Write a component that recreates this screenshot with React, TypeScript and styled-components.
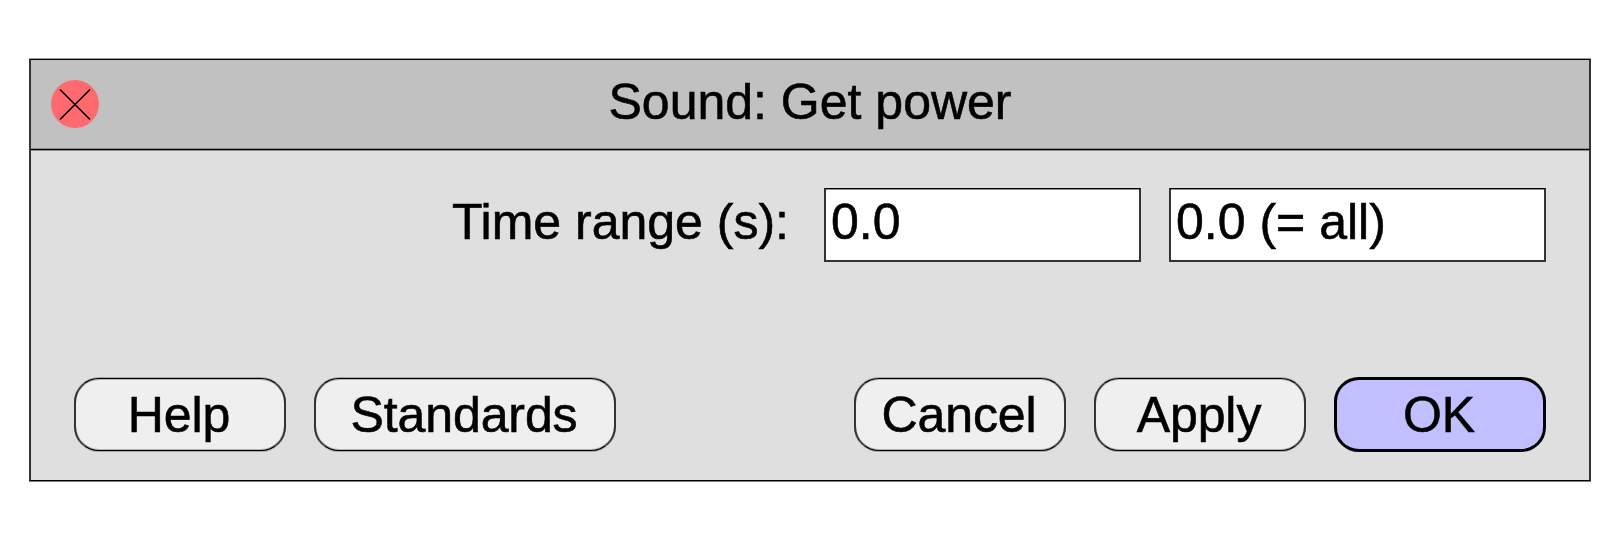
import React from "react";
import styled, { createGlobalStyle, css } from "styled-components";

const GlobalStyle = createGlobalStyle`
  * { box-sizing: border-box; }
  body { margin: 0; background: #fff; }
`;

const Page = styled.main`
  height: 540px;
  padding: 59px 29px;
  font: 50px/72px "Liberation Sans", Arial, Helvetica, sans-serif;
  color: #000;
  white-space: nowrap;
  -webkit-text-stroke: 0.6px #000;
`;

const Dialog = styled.section`
  display: flex;
  flex-direction: column;
  width: 1562px;
  height: 422px;
  background: #dfdfdf;
  border: solid #000;
  border-width: 1px 2px;
  border-color: #000 #333;
  box-shadow: 0 -1px #9f9f9f, 0 1px #7f7f7f;
`;

const TitleBar = styled.header`
  display: grid;
  grid-template-columns: 48px 1fr 48px;
  align-items: center;
  height: 90px;
  padding: 0 20px 1px;
  background: #c1c1c1;
  border-bottom: 1px solid #000;
  box-shadow: 0 1px #8b8b8b, inset 0 -1px #8f8f8f;
`;

const CloseButton = styled.button`
  width: 48px;
  height: 48px;
  padding: 0;
  border: 0;
  border-radius: 50%;
  background: #ff6a6e;

  svg { display: block; }
`;

const Title = styled.h1`
  margin: 0;
  font: inherit;
  text-align: center;
  position: relative;
  top: -2px;
`;

const Fields = styled.div`
  display: flex;
  justify-content: flex-end;
  gap: 28px;
  padding: 38px 43px 0 0;
`;

const Label = styled.label`
  margin-right: 7px;
  line-height: 68px;
`;

const Field = styled.span<{ $width: number }>`
  width: ${(p) => p.$width}px;
  height: 74px;
  padding-left: 5px;
  line-height: 66px;
  background: #fff;
  border: 2px solid #333;
  border-top: 1px solid #000;
  box-shadow: inset 0 1px #8f8f8f;
`;

const Actions = styled.footer`
  display: flex;
  gap: 28px;
  margin-top: auto;
  padding: 0 43px 29px;
`;

const Spacer = styled.div`
  flex: 1;
`;

const Button = styled.button<{ $width?: number; $primary?: boolean }>`
  width: ${(p) => p.$width ?? 212}px;
  height: 73px;
  padding: 2px 2px 0 0;
  font: inherit;
  line-height: 69px;
  letter-spacing: -0.1px;
  color: #000;
  text-align: center;
  background: #efefef;
  border: solid;
  border-width: 1px 2px;
  border-color: #000 #333;
  border-radius: 25px / 24.5px;
  box-shadow: 0 -1px rgba(0, 0, 0, 0.25), 0 1px rgba(0, 0, 0, 0.25),
    inset 0 1px rgba(0, 0, 0, 0.25), inset 0 -1px rgba(0, 0, 0, 0.25);

  ${(p) =>
    p.$primary &&
    css`
      background: #c1bfff;
      border: 3px solid #000;
      height: 75px;
      margin: -1px 0;
      line-height: 67px;
      box-shadow: none;
    `}
`;

export default function App() {
  return (
    <Page>
      <GlobalStyle />
      <Dialog>
        <TitleBar>
          <CloseButton aria-label="Close">
            <svg width="48" height="48" stroke="#000" strokeWidth="1.6" fill="none">
              <path d="M9 9.5L39 39.5M39 9.5L9 39.5" />
            </svg>
          </CloseButton>
          <Title>Sound: Get power</Title>
        </TitleBar>
        <Fields>
          <Label>Time range (s):</Label>
          <Field $width={317}>0.0</Field>
          <Field $width={377}>0.0 (= all)</Field>
        </Fields>
        <Actions>
          <Button>Help</Button>
          <Button $width={302}>Standards</Button>
          <Spacer />
          <Button>Cancel</Button>
          <Button>Apply</Button>
          <Button $primary>OK</Button>
        </Actions>
      </Dialog>
    </Page>
  );
}
